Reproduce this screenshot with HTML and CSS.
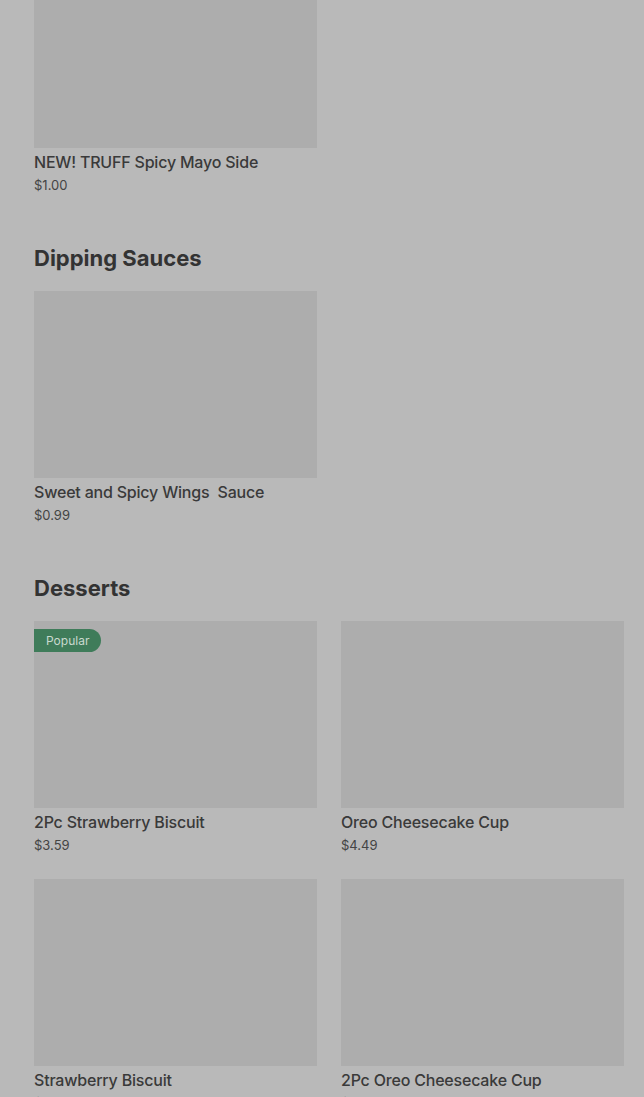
FILE: index.html
```html
<!DOCTYPE html>
<html>
<head>
<meta charset="utf-8">
<link rel="stylesheet" href="styles.css">
</head>
<body>
<main class="menu">
  <section class="section section-first">
    <div class="grid">
      <div class="card">
        <div class="thumb"></div>
        <div class="name">NEW! TRUFF Spicy Mayo Side</div>
        <div class="price">$1.00</div>
      </div>
    </div>
  </section>
  <section class="section">
    <h2 class="heading">Dipping Sauces</h2>
    <div class="grid">
      <div class="card">
        <div class="thumb"></div>
        <div class="name">Sweet and Spicy Wings&nbsp; Sauce</div>
        <div class="price">$0.99</div>
      </div>
    </div>
  </section>
  <section class="section">
    <h2 class="heading">Desserts</h2>
    <div class="grid">
      <div class="card">
        <div class="thumb"><span class="badge">Popular</span></div>
        <div class="name">2Pc Strawberry Biscuit</div>
        <div class="price">$3.59</div>
      </div>
      <div class="card">
        <div class="thumb"></div>
        <div class="name">Oreo Cheesecake Cup</div>
        <div class="price">$4.49</div>
      </div>
      <div class="card">
        <div class="thumb"></div>
        <div class="name">Strawberry Biscuit</div>
        <div class="price">$1.99</div>
      </div>
      <div class="card">
        <div class="thumb"></div>
        <div class="name">2Pc Oreo Cheesecake Cup</div>
        <div class="price">$7.99</div>
      </div>
    </div>
  </section>
</main>
</body>
</html>
```
FILE: styles.css
```css
html, body {
  margin: 0;
  padding: 0;
  background: #b9b9b9;
  overflow: hidden;
}
body {
  font-family: Inter, "Noto Sans", sans-serif;
  color: #3a3a3a;
}
.menu {
  padding: 0 20px 0 34px;
  display: flex;
  flex-direction: column;
  gap: 50px;
}
.section-first {
  margin-top: -39px;
}
.heading {
  margin: 0 0 19px;
  font-size: 22px;
  line-height: 28px;
  font-weight: 700;
  letter-spacing: 0;
  color: #333;
}
.grid {
  display: grid;
  grid-template-columns: 283px 283px;
  column-gap: 24px;
  row-gap: 25px;
}
.card {
  display: flex;
  flex-direction: column;
}
.thumb {
  position: relative;
  height: 187px;
  background: #adadad;
}
.badge {
  position: absolute;
  top: 8px;
  left: 0;
  height: 23px;
  line-height: 23px;
  padding: 0 12px;
  background: #3f7c5a;
  color: #c9d9cf;
  font-size: 12px;
  border-radius: 0 12px 12px 0;
}
.name {
  margin-top: 4px;
  font-size: 16px;
  line-height: 20px;
  font-weight: 500;
  letter-spacing: -0.2px;
}
.price {
  margin-top: 4px;
  font-size: 13px;
  line-height: 18px;
  color: #444;
}
```
